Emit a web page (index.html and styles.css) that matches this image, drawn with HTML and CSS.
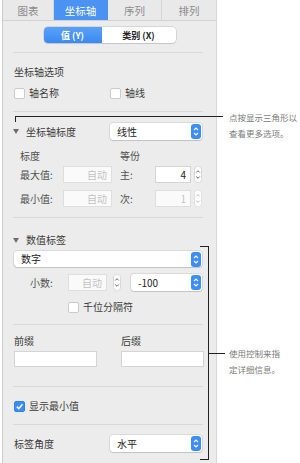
FILE: index.html
```html
<!DOCTYPE html>
<html lang="zh-CN">
<head>
    <meta charset="UTF-8">
    <meta name="viewport" content="width=device-width, initial-scale=1.0">
    <title>坐标轴</title>
    <link rel="stylesheet" href="styles.css">
</head>
<body>
<div class="stage">
    <div class="panel">
        <!-- Tabs -->
        <div class="tabs">
            <div class="tab">图表</div>
            <div class="tab active">坐标轴</div>
            <div class="tab">序列</div>
            <div class="tab">排列</div>
        </div>

        <div class="segment-wrap">
            <div class="segment">
                <span class="seg on">值 (Y)</span>
                <span class="seg">类别 (X)</span>
            </div>
        </div>

        <div class="body">
            <!-- Axis options -->
            <section class="group g-options">
                <div class="line">坐标轴选项</div>
                <div class="cols row-gap5">
                    <label class="check"><span class="box"></span>轴名称</label>
                    <label class="check"><span class="box"></span>轴线</label>
                </div>
            </section>

            <!-- Axis scale -->
            <section class="group g-scale">
                <div class="cols">
                    <div class="disclose"><span class="tri"></span>坐标轴标度</div>
                    <div class="select">
                        <span>线性</span>
                        <svg class="spin" width="10" height="15" viewBox="0 0 10 15"><rect width="10" height="15" rx="3" fill="#3b8ef5"/><path d="M3 6 L5 4 L7 6 M3 9 L5 11 L7 9" fill="none" stroke="#fff" stroke-width="1.1"/></svg>
                    </div>
                </div>
                <div class="sub">
                    <div class="sub-head"><span class="w100">标度</span><span>等份</span></div>
                    <div class="scale-row mt2">
                        <span class="lab43">最大值:</span>
                        <div class="field muted w49">自动</div>
                        <span class="lab35">主:</span>
                        <div class="field w36">4</div>
                        <svg class="stepper" width="8" height="17" viewBox="0 0 8 17"><rect x="0.5" y="0.5" width="7" height="16" rx="3" fill="#fff" stroke="#d8d8d8"/><path d="M2.2 6.5 L4 4.7 L5.8 6.5 M2.2 10.5 L4 12.3 L5.8 10.5" fill="none" stroke="#555" stroke-width="0.9"/></svg>
                    </div>
                    <div class="scale-row mt7">
                        <span class="lab43">最小值:</span>
                        <div class="field muted w49">自动</div>
                        <span class="lab35">次:</span>
                        <div class="field muted w36">1</div>
                        <svg class="stepper" width="8" height="17" viewBox="0 0 8 17"><rect x="0.5" y="0.5" width="7" height="16" rx="3" fill="#fff" stroke="#e0e0e0"/><path d="M2.2 6.5 L4 4.7 L5.8 6.5 M2.2 10.5 L4 12.3 L5.8 10.5" fill="none" stroke="#b8b8b8" stroke-width="0.9"/></svg>
                    </div>
                </div>
            </section>

            <!-- Value labels -->
            <section class="group g-labels">
                <div class="disclose"><span class="tri"></span>数值标签</div>
                <div class="select tall16 mt3">
                    <span>数字</span>
                    <svg class="spin" width="10" height="15" viewBox="0 0 10 15"><rect width="10" height="15" rx="3" fill="#3b8ef5"/><path d="M3 6 L5 4 L7 6 M3 9 L5 11 L7 9" fill="none" stroke="#fff" stroke-width="1.1"/></svg>
                </div>
                <div class="decimal-row">
                    <span class="lab-dec">小数:</span>
                    <div class="field muted w39">自动</div>
                    <svg class="stepper" width="8" height="17" viewBox="0 0 8 17"><rect x="0.5" y="0.5" width="7" height="16" rx="3" fill="#fff" stroke="#d8d8d8"/><path d="M2.2 6.5 L4 4.7 L5.8 6.5 M2.2 10.5 L4 12.3 L5.8 10.5" fill="none" stroke="#555" stroke-width="0.9"/></svg>
                    <div class="select grow">
                        <span>-100</span>
                        <svg class="spin" width="10" height="15" viewBox="0 0 10 15"><rect width="10" height="15" rx="3" fill="#3b8ef5"/><path d="M3 6 L5 4 L7 6 M3 9 L5 11 L7 9" fill="none" stroke="#fff" stroke-width="1.1"/></svg>
                    </div>
                </div>
                <label class="check indent54"><span class="box"></span>千位分隔符</label>
            </section>

            <!-- Prefix / suffix -->
            <section class="group g-affix">
                <div class="affix">
                    <div class="affix-col">
                        <span class="line">前缀</span>
                        <div class="field plain"></div>
                    </div>
                    <div class="affix-col">
                        <span class="line">后缀</span>
                        <div class="field plain wide"></div>
                    </div>
                </div>
            </section>

            <section class="group g-min">
                <label class="check"><span class="box checked"><svg width="9" height="9" viewBox="0 0 9 9"><path d="M1.8 4.6 L3.8 6.6 L7.4 2.2" fill="none" stroke="#fff" stroke-width="1.5"/></svg></span>显示最小值</label>
            </section>

            <section class="group g-angle">
                <div class="cols">
                    <span class="line">标签角度</span>
                    <div class="select">
                        <span>水平</span>
                        <svg class="spin" width="10" height="15" viewBox="0 0 10 15"><rect width="10" height="15" rx="3" fill="#3b8ef5"/><path d="M3 6 L5 4 L7 6 M3 9 L5 11 L7 9" fill="none" stroke="#fff" stroke-width="1.1"/></svg>
                    </div>
                </div>
            </section>
        </div>
    </div>

    <!-- Callout annotations -->
    <div class="bracket-top"></div>
    <div class="bracket-top-tick"></div>
    <div class="note note-top">点按显示三角形以<br>查看更多选项。</div>

    <div class="bracket-side"></div>
    <div class="bracket-side-line"></div>
    <div class="note note-side">使用控制来指<br>定详细信息。</div>
</div>
</body>
</html>
```

FILE: styles.css
```css
* {
    box-sizing: border-box;
}

body {
    margin: 0;
    background: #fff;
    font-family: "Noto Sans CJK SC", "Noto Sans", sans-serif;
    font-size: 10px;
    color: #3c3c3c;
}

.stage {
    position: relative;
    width: 300px;
    height: 463px;
    overflow: hidden;
}

.panel {
    margin-left: 2px;
    width: 215px;
    min-height: 463px;
    background: #ececec;
    border-left: 1px solid #cdcdcd;
    border-right: 1px solid #d8d8d8;
}

/* Tabs */
.tabs {
    display: grid;
    grid-template-columns: 51px 54px 54px 1fr;
    height: 21px;
    background: #e9e9e9;
    border-bottom: 1px solid #d2d2d2;
}

.tab {
    display: flex;
    align-items: center;
    justify-content: center;
    color: #8c8c8c;
    font-size: 10.5px;
    border-right: 1px solid #d6d6d6;
}

.tab:last-child {
    border-right: none;
}

.tab.active {
    background: #4a93f3;
    color: #fff;
    border-right-color: #4a93f3;
}

/* Segmented control */
.segment-wrap {
    padding: 6px 0 9px;
}

.segment {
    display: grid;
    grid-template-columns: 58px 1fr;
    width: 132px;
    height: 16px;
    margin: 0 auto;
    background: #fff;
    border-radius: 4px;
    box-shadow: 0 0 0 0.5px rgba(0, 0, 0, 0.18), 0 1px 1px rgba(0, 0, 0, 0.08);
    overflow: hidden;
}

.seg {
    display: flex;
    align-items: center;
    justify-content: center;
    font-size: 9px;
    font-weight: 700;
    color: #222;
}

.seg.on {
    background: linear-gradient(#5aa0f7, #3a8af3);
    color: #fff;
}

/* Groups */
.body {
    padding: 0 14px 0 11px;
}

.group {
    margin: 0 -1px;
    padding-left: 1px;
    padding-right: 1px;
    border-top: 1px solid #d9d9d9;
}

.line {
    display: block;
    line-height: 16px;
    height: 16px;
}

.cols {
    display: grid;
    grid-template-columns: 96px 1fr;
    align-items: center;
}

.row-gap5 {
    margin-top: 5px;
}

.g-options {
    padding-top: 11px;
    padding-bottom: 10px;
}

.g-scale {
    padding-top: 11px;
    padding-bottom: 10px;
}

.g-labels {
    padding-top: 14px;
    padding-bottom: 9px;
}

.g-affix {
    padding-top: 8px;
    padding-bottom: 19px;
}

.g-min {
    padding-top: 11px;
    padding-bottom: 10px;
}

.g-angle {
    padding-top: 10px;
}

/* Checkbox */
.check {
    display: flex;
    align-items: center;
    height: 16px;
    line-height: 16px;
}

.box {
    display: inline-flex;
    align-items: center;
    justify-content: center;
    width: 11px;
    height: 11px;
    margin-right: 4px;
    background: #fff;
    border: 1px solid #cbcbcb;
    border-radius: 2px;
}

.box.checked {
    background: #3b8ef5;
    border-color: #3584ec;
}

.indent54 {
    margin-top: 8px;
    padding-left: 54px;
}

/* Disclosure */
.disclose {
    display: flex;
    align-items: center;
    height: 16px;
    line-height: 16px;
}

.tri {
    width: 0;
    height: 0;
    margin-left: -1px;
    margin-right: 7px;
    border-left: 3px solid transparent;
    border-right: 3px solid transparent;
    border-top: 5px solid #6e6e6e;
}

/* Popup select */
.select {
    display: flex;
    align-items: center;
    justify-content: space-between;
    height: 17px;
    padding: 0 1px 0 7px;
    background: #fff;
    border-radius: 3px;
    box-shadow: 0 0 0 0.5px rgba(0, 0, 0, 0.16), 0 1px 1px rgba(0, 0, 0, 0.1);
    color: #222;
    line-height: 16px;
}

.select.tall16 {
    height: 16px;
}

.spin {
    display: block;
}

.grow {
    flex: 1;
}

.mt2 {
    margin-top: 2px;
}

.mt3 {
    margin-top: 3px;
}

.mt7 {
    margin-top: 7px;
}

/* Scale rows */
.sub {
    padding-left: 6px;
    color: #505050;
}

.sub-head {
    display: flex;
    height: 16px;
    line-height: 16px;
    margin-top: 8px;
}

.w100 {
    width: 100px;
}

.scale-row {
    display: flex;
    align-items: center;
    height: 17px;
}

.lab43 {
    width: 43px;
}

.lab35 {
    width: 35px;
    margin-left: 8px;
}

.field {
    height: 17px;
    padding-right: 4px;
    background: #fff;
    border: 1px solid #d4d4d4;
    text-align: right;
    line-height: 15px;
    color: #222;
}

.field.muted {
    color: #c2c2c2;
    background: #fafafa;
    border-color: #dedede;
}

.w49 {
    width: 49px;
}

.w36 {
    width: 36px;
}

.w39 {
    width: 39px;
}

.stepper {
    display: block;
    margin-left: 3px;
}

/* Decimal row */
.decimal-row {
    display: flex;
    align-items: center;
    height: 17px;
    margin-top: 7px;
    padding-left: 16px;
    color: #505050;
}

.lab-dec {
    width: 38px;
}

.decimal-row .stepper {
    margin-left: 6px;
    margin-right: 10px;
}

/* Prefix / suffix */
.affix {
    display: grid;
    grid-template-columns: 107px 1fr;
}

.affix-col .field {
    margin-top: 2px;
    height: 16px;
}

.field.plain {
    width: 83px;
}

.field.plain.wide {
    width: 83px;
}

/* Annotations */
.bracket-top {
    position: absolute;
    left: 15px;
    top: 116px;
    width: 208px;
    height: 1px;
    background: #222;
}

.bracket-top-tick {
    position: absolute;
    left: 15px;
    top: 116px;
    width: 1px;
    height: 6px;
    background: #222;
}

.bracket-side {
    position: absolute;
    left: 200px;
    top: 246px;
    width: 9px;
    height: 214px;
    border: 1px solid #222;
    border-left: none;
}

.bracket-side-line {
    position: absolute;
    left: 208px;
    top: 353px;
    width: 17px;
    height: 1px;
    background: #222;
}

.note {
    position: absolute;
    left: 229px;
    font-size: 8.5px;
    line-height: 16px;
    color: #7a7a7a;
}

.note-top {
    top: 109px;
}

.note-side {
    top: 345px;
}
```
